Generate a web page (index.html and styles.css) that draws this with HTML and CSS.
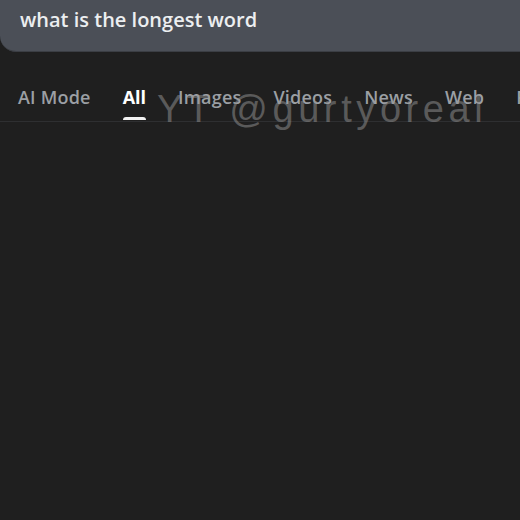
FILE: index.html
```html
<!DOCTYPE html>
<html lang="en">
<head>
<meta charset="utf-8">
<title>what is the longest word</title>
<link rel="stylesheet" href="styles.css">
</head>
<body>
<header class="searchbar">
  <span class="query">what is the longest word</span>
</header>
<nav class="tabs">
  <span class="tab">AI Mode</span>
  <span class="tab active">All</span>
  <span class="tab">Images</span>
  <span class="tab">Videos</span>
  <span class="tab">News</span>
  <span class="tab">Web</span>
  <span class="tab">Forums</span>
</nav>
<main class="results"></main>
<div class="watermark">YT @gurtyoreal</div>
</body>
</html>
```
FILE: styles.css
```css
html, body {
  margin: 0;
  padding: 0;
  background: #1f1f1f;
  height: 100%;
  overflow: hidden;
}
body {
  position: relative;
  font-family: "Open Sans", "Liberation Sans", sans-serif;
}
.searchbar {
  height: 52px;
  background: #4b4f57;
  border-bottom-left-radius: 16px;
  display: flex;
  align-items: flex-start;
  box-sizing: border-box;
  padding-left: 20px;
  padding-top: 6px;
  border-bottom: 1px solid #3b3e44;
}
.query {
  color: #eceef0;
  font-size: 20px;
  line-height: 28px;
  font-weight: 600;
}
.tabs {
  display: flex;
  gap: 32px;
  padding-left: 18px;
  margin-top: 31px;
  height: 38px;
  border-bottom: 1px solid #2e2f31;
  white-space: nowrap;
  overflow: hidden;
}
.tab {
  position: relative;
  color: #9b9fa4;
  font-size: 18px;
  letter-spacing: 0.2px;
  font-weight: 600;
  line-height: 28px;
}
.tab.active {
  color: #ffffff;
  font-weight: 700;
  letter-spacing: 0;
}
.tab.active::after {
  content: "";
  position: absolute;
  left: 0;
  right: 0;
  top: 34px;
  height: 3px;
  border-radius: 3px 3px 0 0;
  background: #f2f2f2;
}
.watermark {
  position: absolute;
  left: 157px;
  top: 90px;
  font-family: "Liberation Sans", Arial, sans-serif;
  font-size: 38px;
  letter-spacing: 4.6px;
  line-height: 38px;
  white-space: nowrap;
  color: rgba(150, 150, 150, 0.5);
  pointer-events: none;
}
.results {
  height: 400px;
}
```
